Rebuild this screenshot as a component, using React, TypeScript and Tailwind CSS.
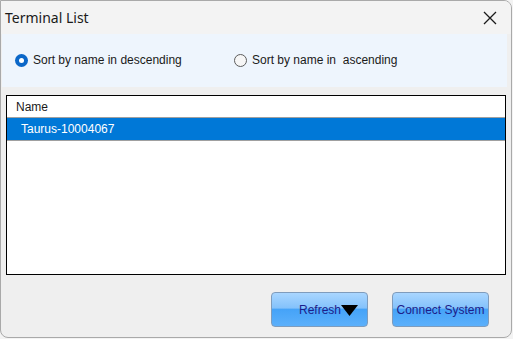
import { useState } from "react";

const rows = ["Taurus-10004067"];

export default function App() {
  const [order, setOrder] = useState<"desc" | "asc">("desc");
  const [selected, setSelected] = useState(0);

  return (
    <div className="w-[513px] h-[339px] bg-[#f3f3f3] overflow-hidden">
      <div className="w-[512px] h-[338px] flex flex-col bg-[#efefef] border border-[#a9a9a9] rounded-b-[8px] rounded-tr-[8px] overflow-hidden">
        {/* Title bar */}
        <div className="h-[33px] shrink-0 flex items-center justify-between bg-[#f3f3f3] pl-[4px] pr-[14px]">
          <span className="text-[14px] text-[#1a1a1a] font-['Noto_Sans',sans-serif]">Terminal List</span>
          <svg width="14" height="14" viewBox="0 0 14 14" className="text-[#1a1a1a]">
            <path d="M1 1 L13 13 M13 1 L1 13" stroke="currentColor" strokeWidth="1.3" fill="none" />
          </svg>
        </div>

        {/* Sort options */}
        <div className="h-[53px] shrink-0 mx-[1px] mr-[4px] bg-[#eef5fd] flex items-center pl-[13px] pb-[1px] text-[12px] text-[#1a1a1a] font-['Liberation_Sans',Arial,sans-serif]">
          <label className="flex items-center gap-[5px] w-[219px] cursor-pointer" onClick={() => setOrder("desc")}>
            <span className={`w-[13px] h-[13px] rounded-full flex items-center justify-center ${order === "desc" ? "bg-[#0b67c8]" : "border border-[#5c5c5c] bg-[#f6f6f6]"}`}>
              {order === "desc" && <span className="w-[5px] h-[5px] rounded-full bg-white" />}
            </span>
            Sort by name in descending
          </label>
          <label className="flex items-center gap-[5px] cursor-pointer" onClick={() => setOrder("asc")}>
            <span className={`w-[13px] h-[13px] rounded-full flex items-center justify-center ${order === "asc" ? "bg-[#0b67c8]" : "border border-[#5c5c5c] bg-[#f6f6f6]"}`}>
              {order === "asc" && <span className="w-[5px] h-[5px] rounded-full bg-white" />}
            </span>
            <span className="whitespace-pre">Sort by name in  ascending</span>
          </label>
        </div>

        {/* List */}
        <div className="ml-[5px] mr-[5px] mt-[8px] h-[180px] shrink-0 bg-white border border-black flex flex-col text-[12px] font-['Liberation_Sans',Arial,sans-serif]">
          <div className="h-[22px] shrink-0 flex items-center pl-[9px] text-[#1a1a1a] border-b border-[#a0a0a0]">Name</div>
          {rows.map((r, i) => (
            <div
              key={r}
              onClick={() => setSelected(i)}
              className={`h-[23px] shrink-0 flex items-center pl-[14px] border-b border-[#a0a0a0] ${selected === i ? "bg-[#0078d7] text-white" : "text-[#1a1a1a]"}`}
            >
              {r}
            </div>
          ))}
        </div>

        {/* Buttons */}
        <div className="flex justify-end gap-[24px] pr-[22px] mt-[17px] text-[12px] font-['Liberation_Sans',Arial,sans-serif]">
          <button className="w-[97px] h-[35px] rounded-[4px] border border-[#7f9cbc] bg-[linear-gradient(to_bottom,#a9d6ff_0%,#84c2fb_45%,#45a3f8_50%,#5cb0fb_100%)] text-[#1d1d8a] flex items-center justify-end pr-[9px]">
            Refresh
            <svg width="17" height="11" viewBox="0 0 17 11" className="mt-[2px]">
              <path d="M0 0 H17 L8.5 11 Z" fill="#000" />
            </svg>
          </button>
          <button className="w-[97px] h-[35px] rounded-[4px] border border-[#7f9cbc] bg-[linear-gradient(to_bottom,#a9d6ff_0%,#84c2fb_45%,#45a3f8_50%,#5cb0fb_100%)] text-[#1d1d8a] flex items-center justify-center">
            Connect System
          </button>
        </div>
      </div>
    </div>
  );
}
